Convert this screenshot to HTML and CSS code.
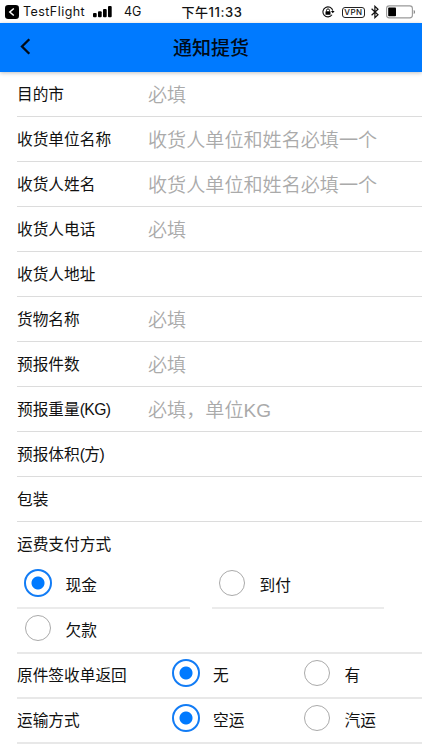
FILE: index.html
```html
<!DOCTYPE html>
<html lang="zh-CN">
<head>
<meta charset="utf-8">
<title>通知提货</title>
<link rel="stylesheet" href="styles.css">
</head>
<body>
<div class="status">
  <div class="status-left">
    <svg class="back-app" width="14" height="14" viewBox="0 0 14 14"><rect width="14" height="14" rx="3.2"/><path d="M8.8 3.5 4.8 7l4 3.5" fill="none" stroke="#fff" stroke-width="1.5"/></svg>
    <span class="app">TestFlight</span>
    <svg class="signal" width="20" height="12" viewBox="0 0 20 12"><rect x="0" y="7" width="3.7" height="4.3" rx="1"/><rect x="5" y="5.3" width="3.7" height="6" rx="1"/><rect x="10" y="3" width="3.7" height="8.3" rx="1"/><rect x="15" y="0" width="3.7" height="11.3" rx="1"/></svg>
    <span class="net">4G</span>
  </div>
  <div class="time">下午11:33</div>
  <div class="status-right">
    <svg width="13" height="12" viewBox="0 0 13 12"><path d="M10.8 4.7A5 5 0 1 0 10 8.8" fill="none" stroke="#111" stroke-width="1.1"/><path d="M8.9 4.9h3.7l-1.8 2.4z"/><rect x="3.5" y="5.2" width="5" height="3.5" rx=".5"/><path d="M4.5 5.5V4.4a1.5 1.5 0 0 1 3 0v1.1" fill="none" stroke="#111"/></svg>
    <span class="vpn">VPN</span>
    <svg class="bt" width="8" height="14" viewBox="0 0 8 14"><path d="M.6 3.8 7 9.8 3.9 12.7V1.3L7 4.2.6 10.2" fill="none" stroke="#111" stroke-width="1.2"/></svg>
    <svg class="battery" width="30" height="14" viewBox="0 0 30 14"><rect x=".6" y=".9" width="25.8" height="12" rx="2.6" fill="#fff" stroke="#999" stroke-width="1.1"/><rect x="2.2" y="2.6" width="7.8" height="8.6" rx=".8"/><path d="M27.7 5c1.8.5 1.8 3.5 0 4z" fill="#888"/></svg>
  </div>
</div>
<header class="nav">
  <svg class="back" width="11" height="17" viewBox="0 0 11 17"><path d="M9.3 1.3 2 8.5l7.3 7.2" fill="none" stroke="#000b18" stroke-width="2.3"/></svg>
  <h1>通知提货</h1>
</header>
<main class="form">
  <label class="row"><span class="label">目的市</span><input placeholder="必填"></label>
  <label class="row"><span class="label">收货单位名称</span><input placeholder="收货人单位和姓名必填一个"></label>
  <label class="row"><span class="label">收货人姓名</span><input placeholder="收货人单位和姓名必填一个"></label>
  <label class="row"><span class="label">收货人电话</span><input placeholder="必填"></label>
  <label class="row"><span class="label">收货人地址</span><input></label>
  <label class="row"><span class="label">货物名称</span><input placeholder="必填"></label>
  <label class="row"><span class="label">预报件数</span><input placeholder="必填"></label>
  <label class="row"><span class="label">预报重量<span class="unit">(KG)</span></span><input placeholder="必填，单位KG"></label>
  <label class="row"><span class="label">预报体积<span class="unit">(方)</span></span><input></label>
  <label class="row"><span class="label">包装</span><input></label>
  <section class="payment">
    <div class="label payment-title">运费支付方式</div>
    <div class="options">
      <div class="option"><i class="radio on"></i><span>现金</span></div>
      <div class="option"><i class="radio"></i><span>到付</span></div>
      <div class="option last"><i class="radio"></i><span>欠款</span></div>
    </div>
  </section>
  <div class="row choice"><span class="label">原件签收单返回</span><div class="pick"><i class="radio on"></i><span>无</span></div><div class="pick"><i class="radio"></i><span>有</span></div></div>
  <div class="row choice"><span class="label">运输方式</span><div class="pick"><i class="radio on"></i><span>空运</span></div><div class="pick"><i class="radio"></i><span>汽运</span></div></div>
</main>
</body>
</html>
```
FILE: styles.css
```css
* { box-sizing: border-box; }
body {
  margin: 0;
  height: 750px;
  overflow: hidden;
  background: #fff;
  color: #111;
  font-family: "Liberation Sans", "Noto Sans CJK SC", sans-serif;
  font-size: 15.7px;
}
svg { display: block; flex: none; }
.status {
  height: 23px;
  display: grid;
  grid-template-columns: 1fr auto 1fr;
  align-items: center;
  padding: 1px 6px 0 5px;
  font: 12.5px/20px Inter, "Noto Sans CJK SC", sans-serif;
  white-space: nowrap;
}
.status-left, .status-right { display: flex; align-items: center; }
.app { width: 61px; margin-left: 4px; letter-spacing: .45px; }
.signal { margin: 0 11px 0 9px; }
.time { padding-left: 3px; font-size: 13px; font-weight: 500; letter-spacing: .6px; }
.status-right { justify-content: flex-end; }
.vpn {
  width: 23px;
  height: 11px;
  margin: 0 6px 0 7px;
  border: 1px solid #222;
  border-radius: 3px;
  font-size: 8px;
  font-weight: 500;
  line-height: 9px;
  letter-spacing: .5px;
  text-align: center;
}
.battery { margin-left: 7px; }
.nav {
  height: 49px;
  display: grid;
  grid-template-columns: 60px 1fr 60px;
  align-items: center;
  background: #007aff;
  box-shadow: 0 1px 4px rgba(0, 0, 0, .25);
}
.back { margin-left: 20px; margin-top: -2px; }
.nav h1 {
  margin: 0;
  padding-top: 2px;
  font-size: 19px;
  line-height: 28px;
  font-weight: 500;
  text-align: center;
  color: #000b18;
}
.form { padding-left: 17px; }
.row {
  height: 45px;
  display: flex;
  align-items: center;
  border-bottom: 1px solid #dcdcdc;
}
.label { flex: none; width: 131px; padding: 2px 0 0; line-height: 24px; white-space: nowrap; }
.unit { letter-spacing: -.6px; }
.row input {
  flex: 1;
  min-width: 0;
  height: 43px;
  padding: 4px 0 0;
  border: 0;
  outline: 0;
  background: none;
  font: inherit;
  font-size: 19.1px;
}
.row input::placeholder { color: #aaa; font-weight: 350; opacity: 1; }
.payment { height: 132px; border-bottom: 2px solid #e8e8e8; }
.payment-title { padding-top: 11px; height: 42px; }
.options {
  display: grid;
  grid-template-columns: 173px 172px;
  grid-auto-rows: 45px;
  column-gap: 22px;
}
.option { display: flex; align-items: center; padding: 0 0 5px 7px; border-bottom: 2px solid #ebebeb; }
.option:nth-child(2) { padding-left: 6px; }
.option.last { border-bottom: 0; padding-bottom: 7px; }
.option span, .pick span { margin: 6px 0 0 13.5px; line-height: 22px; }
.radio {
  flex: none;
  width: 26px;
  height: 26px;
  margin: 0 1px;
  border: 1px solid #aaa;
  border-radius: 50%;
}
.radio.on {
  width: 28px;
  height: 28px;
  margin: 0;
  border: 2px solid #127cf5;
  background: radial-gradient(circle, #007aff 6px, transparent 7px);
}
.choice { border-bottom: 2px solid #e8e8e8; }
.choice .label { width: 154.5px; padding-top: 0; }
.pick { flex: none; width: 131.5px; display: flex; align-items: center; margin-top: -5px; }
```
